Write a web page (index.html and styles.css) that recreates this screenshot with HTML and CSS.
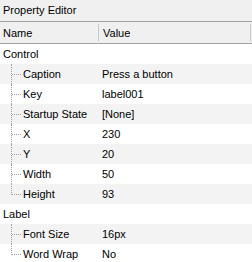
FILE: index.html
```html
<!DOCTYPE html>
<html lang="en">
<head>
  <meta charset="UTF-8" />
  <title>Property Editor</title>
  <link rel="stylesheet" href="styles.css">
</head>
<body>
<div class="panel">
  <div class="title">Property Editor</div>
  <div class="head">
    <div class="col name-col">Name</div>
    <div class="col">Value</div>
  </div>
  <div class="rows">
    <div class="row group"><div class="name">Control</div><div class="value"></div></div>
    <div class="row"><div class="name"><span class="branch"></span>Caption</div><div class="value">Press a button</div></div>
    <div class="row"><div class="name"><span class="branch"></span>Key</div><div class="value">label001</div></div>
    <div class="row"><div class="name"><span class="branch"></span>Startup State</div><div class="value">[None]</div></div>
    <div class="row"><div class="name"><span class="branch"></span>X</div><div class="value">230</div></div>
    <div class="row"><div class="name"><span class="branch"></span>Y</div><div class="value">20</div></div>
    <div class="row"><div class="name"><span class="branch"></span>Width</div><div class="value">50</div></div>
    <div class="row last"><div class="name"><span class="branch"></span>Height</div><div class="value">93</div></div>
    <div class="row group"><div class="name">Label</div><div class="value"></div></div>
    <div class="row"><div class="name"><span class="branch"></span>Font Size</div><div class="value">16px</div></div>
    <div class="row last"><div class="name"><span class="branch"></span>Word Wrap</div><div class="value">No</div></div>
  </div>
</div>
</body>
</html>
```

FILE: styles.css
```css
* {
  box-sizing: border-box;
}

body {
  margin: 0;
  font-family: 'Liberation Sans', Arial, sans-serif;
  font-size: 11px;
  color: #000;
  background: #fff;
}

.panel {
  width: 252px;
  height: 262px;
  overflow: hidden;
}

.title {
  height: 22px;
  line-height: 21px;
  padding-left: 3px;
  background: #f0f0f0;
  border-bottom: 1px solid #a0a0a0;
}

.head {
  display: grid;
  grid-template-columns: 98px 1fr;
  height: 22px;
  background: #f0f0f0;
  border-bottom: 1px solid #a0a0a0;
}
.col {
  display: flex;
  align-items: center;
  padding-left: 3px;
  margin: 2px 1px 2px 0;
}
.col + .col {
  border-left: 1px solid #c8c8c8;
  border-right: 1px solid #c8c8c8;
  padding-left: 4px;
}
.name-col {
  margin-right: 0;
}

.row {
  display: grid;
  grid-template-columns: 99px 1fr;
  height: 20px;
}
.row:nth-child(even) {
  background: #f3f3f3;
}
.name {
  display: flex;
  align-items: center;
  padding-left: 3px;
}
.value {
  display: flex;
  align-items: center;
  padding-left: 3px;
}

.branch {
  align-self: stretch;
  display: flex;
  align-items: center;
  width: 10px;
  margin: 0 2px 0 8px;
  border-left: 1px dotted #a0a0a0;
}
.branch::after {
  content: '';
  flex: 1;
  border-top: 1px dotted #a0a0a0;
}
.last .branch {
  align-self: flex-start;
  height: 11px;
  align-items: flex-end;
}
```
